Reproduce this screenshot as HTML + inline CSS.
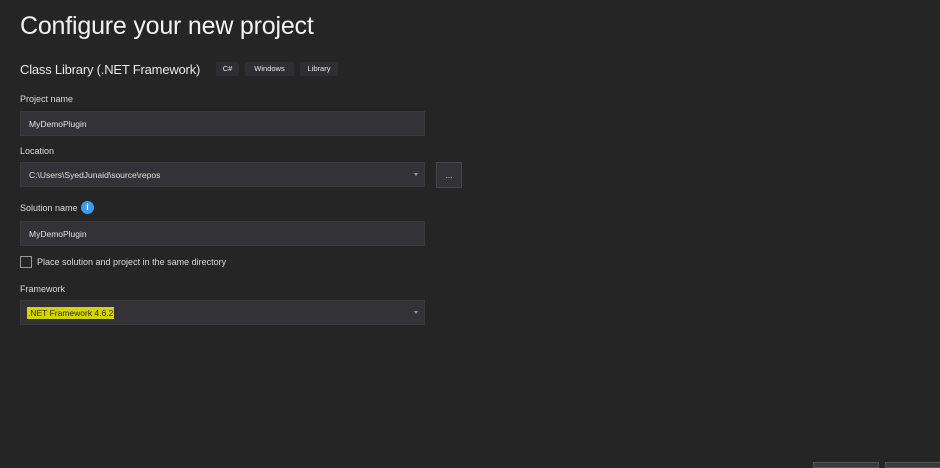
<!DOCTYPE html>
<html><head><style>
body{margin:0;width:940px;height:466px;background:#252526;font-family:"Liberation Sans",sans-serif;color:#e8e8e8;position:relative;overflow:hidden}
div{position:absolute;box-sizing:border-box}
.lbl{font-size:9px;color:#dcdcdc;left:20px}
.in{left:20px;width:405px;height:25px;background:#333337;border:1px solid #3a3a3e;font-size:8.5px;padding:7px 0 0 8px;color:#e0e0e0}
.tag{top:62px;height:14px;background:#2f2f33;font-size:7.5px;text-align:center;line-height:14px;border-radius:2px}
.arr{right:6px;top:10px;width:0;height:0;border-left:2px solid transparent;border-right:2px solid transparent;border-top:3px solid #999}
</style></head><body>
<div style="left:20px;top:12px;font-size:25px;color:#f2f2f2;white-space:nowrap;letter-spacing:-0.2px">Configure your new project</div>
<div style="left:20px;top:62px;font-size:13px;color:#e8e8e8;white-space:nowrap;letter-spacing:-0.2px">Class Library (.NET Framework)</div>
<div class="tag" style="left:216px;width:23px">C#</div>
<div class="tag" style="left:245px;width:49px">Windows</div>
<div class="tag" style="left:300px;width:38px">Library</div>
<div class="lbl" style="top:94px">Project name</div>
<div class="in" style="top:111px">MyDemoPlugin</div>
<div class="lbl" style="top:146px">Location</div>
<div class="in" style="top:162px">C:\Users\SyedJunaid\source\repos<div class="arr"></div></div>
<div style="left:436px;top:162px;width:26px;height:26px;background:#333337;border:1px solid #46464a;font-size:8px;text-align:center;line-height:26px">...</div>
<div class="lbl" style="top:203px">Solution name</div>
<div style="left:81px;top:201px;width:13px;height:13px;border-radius:50%;background:#3b9ce8;color:#fff;font-size:9px;font-weight:bold;text-align:center;line-height:13px">i</div>
<div class="in" style="top:221px">MyDemoPlugin</div>
<div style="left:20px;top:256px;width:12px;height:12px;border:1px solid #9a9a9a"></div>
<div style="left:37px;top:257px;font-size:9px;color:#dcdcdc;white-space:nowrap">Place solution and project in the same directory</div>
<div class="lbl" style="top:284px">Framework</div>
<div class="in" style="top:300px;padding-left:6px"><span style="background:#d4d400;color:#303000;padding:1px 1px">.NET Framework 4.6.2</span><div class="arr"></div></div>
<div style="left:813px;top:462px;width:66px;height:6px;background:#3a3a3e;border:1px solid #555"></div>
<div style="left:885px;top:462px;width:60px;height:6px;background:#3a3a3e;border:1px solid #555"></div>
</body></html>
